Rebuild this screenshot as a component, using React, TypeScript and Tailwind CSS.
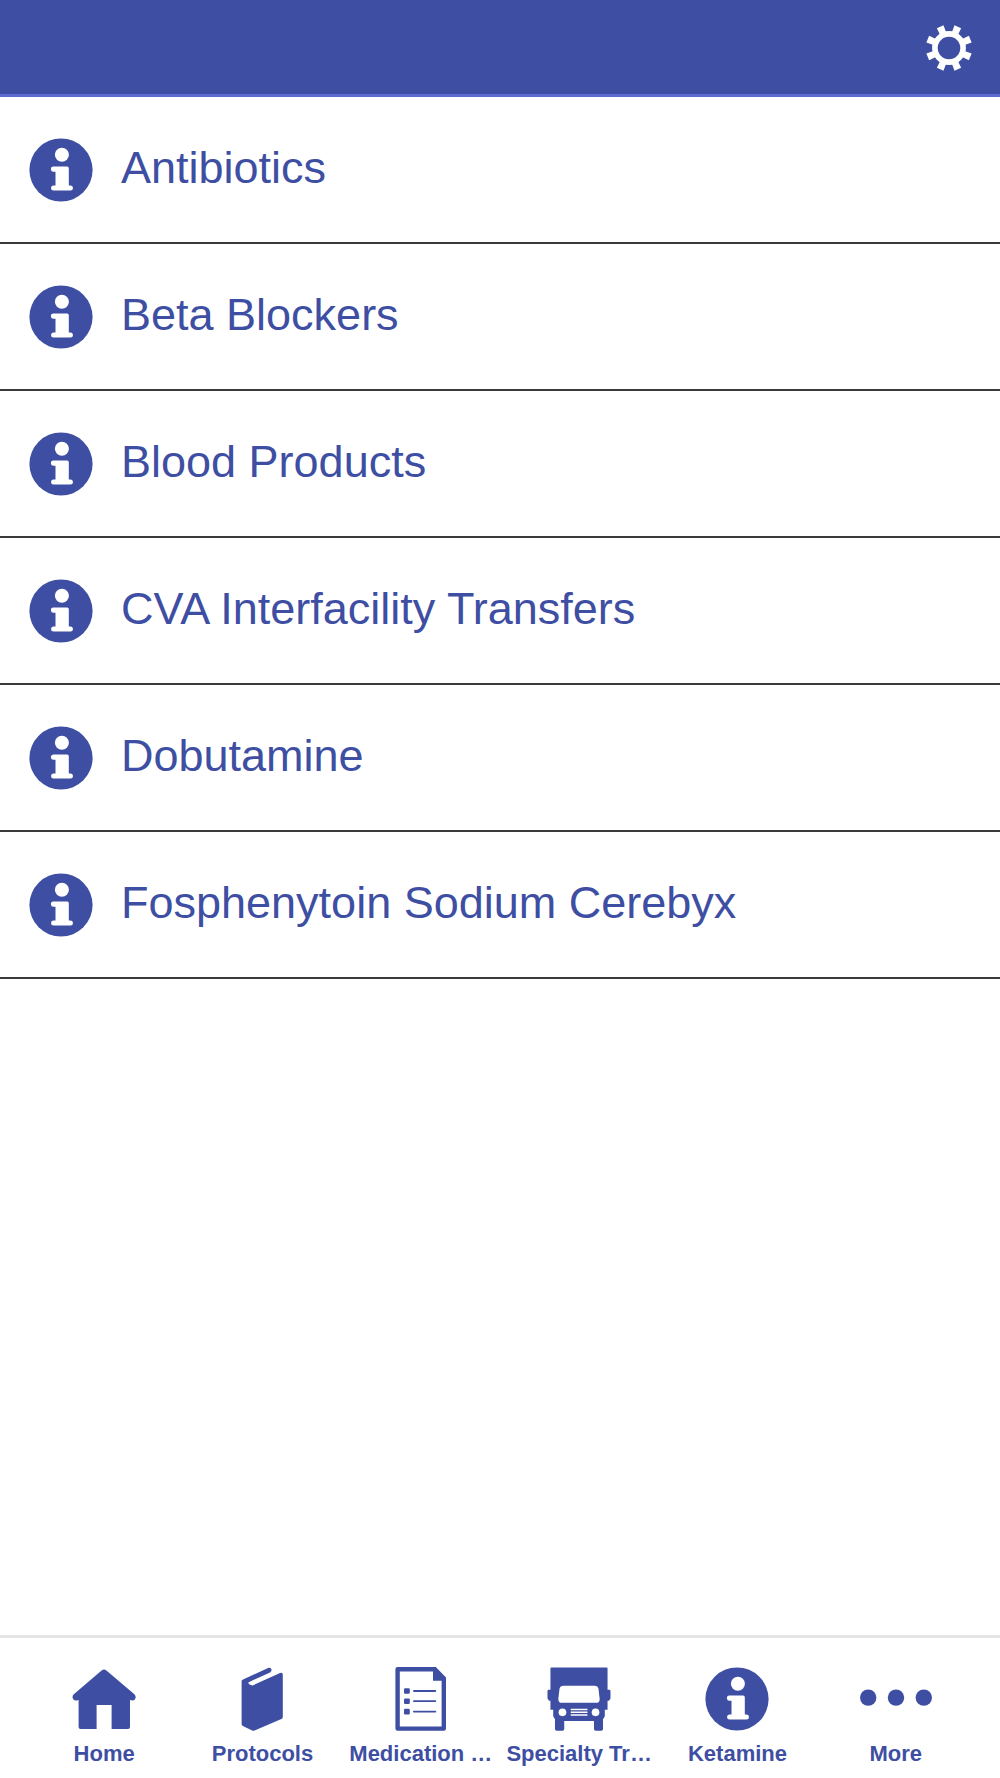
import type { ReactNode } from "react"

interface IconProps {
    className?: string
}

interface Tab {
    label: string
    icon: ReactNode
}

const GearIcon = ({ className }: IconProps) => (
    <svg viewBox="-24 -24 48 48" className={className} fill="currentColor" aria-hidden="true">
        <circle r="14.1" fill="none" stroke="currentColor" strokeWidth="5.6" />
        {[22.5, 67.5, 112.5, 157.5, 202.5, 247.5, 292.5, 337.5].map((angle) => (
            <path key={angle} d="M-3.2 -14 L-3.6 -23 H3.6 L3.2 -14 Z" transform={`rotate(${angle})`} />
        ))}
    </svg>
)

const InfoIcon = ({ className }: IconProps) => (
    <svg viewBox="0 0 64 64" className={className} aria-hidden="true">
        <circle cx="32" cy="32" r="31.6" fill="currentColor" />
        <circle cx="32.9" cy="16.8" r="7" fill="white" />
        <path
            d="M24.4 28.6 H38.2 Q39.8 28.6 39.8 30.2 V47.4 H41.4 A2.5 2.5 0 0 1 41.4 52.4 H24.6 A2.5 2.5 0 0 1 24.6 47.4 H26.5 V33.8 H24.6 A2.6 2.6 0 0 1 24.4 28.6 Z"
            fill="white"
        />
    </svg>
)

const HomeIcon = ({ className }: IconProps) => (
    <svg viewBox="0 0 64 64" className={className} fill="currentColor" aria-hidden="true">
        <path d="M29.6 3.4 Q32 1.4 34.4 3.4 L62.4 27.2 Q64.6 29.6 63 32.2 Q61.4 34.2 58 33 V60 Q58 62 56 62 H39.6 V38 H24.6 V62 H8.6 Q6.6 62 6.6 60 V33 Q3 34.4 1.2 32.2 Q-0.4 29.4 1.8 27.2 Z" />
    </svg>
)

const BookIcon = ({ className }: IconProps) => (
    <svg viewBox="0 0 64 64" className={className} fill="currentColor" aria-hidden="true">
        <path d="M13 12.6 L38.6 0.8 Q41.4 0.4 41.6 3 Q41.6 4.4 40 5.4 L18.2 15.4 Q18.6 17.8 22.8 18.4 L50 6 Q52.8 5.2 52.8 7.6 V50 Q52.8 51.4 51.4 52 L24.6 63.4 Q23.4 64 22.2 63.4 L12.8 59 Q11.6 58.2 11.6 57 V14.6 Q11.6 13.2 13 12.6 Z" />
    </svg>
)

const DocumentIcon = ({ className }: IconProps) => (
    <svg viewBox="0 0 64 64" className={className} fill="currentColor" aria-hidden="true">
        <path
            fillRule="evenodd"
            d="M8.6 0 H46.8 L57 10.4 V61.6 Q57 63.8 55 63.8 H8.6 Q6.4 63.8 6.4 61.6 V2.2 Q6.4 0 8.6 0 Z M10.8 4.6 V59.4 H52.6 V13.8 H44 V4.6 Z"
        />
        {[24, 34.2, 44.6].map((y) => (
            <g key={y}>
                <rect x="15" y={y - 2.8} width="5.8" height="5.6" rx="1.2" />
                <rect x="24" y={y - 0.9} width="23.2" height="1.8" rx="0.8" />
            </g>
        ))}
    </svg>
)

const TruckIcon = ({ className }: IconProps) => (
    <svg viewBox="0 0 64 65" className={className} aria-hidden="true">
        <path
            d="M4 0.6 H60 Q61 0.6 61 1.6 V23 H62.6 Q64 23 64 24.4 V32 L62.4 34.2 H61 V43.4 H58.2 V50 L56.4 53 V63 Q56.4 64.8 54.6 64.8 H49 Q47.2 64.8 47.2 63 V54.8 H17 V63 Q17 64.8 15.2 64.8 H9.4 Q7.6 64.8 7.6 63 V53 L5.8 50 V43.4 H3 V34.2 H1.6 L0 32 V24.4 Q0 23 1.4 23 H3 V1.6 Q3 0.6 4 0.6 Z"
            fill="currentColor"
        />
        <path
            d="M16.4 19 H47.6 Q51.2 19 51.8 22.2 L53 32.4 Q53 36.4 49.4 36.4 H14.6 Q11 36.4 11 32.4 L12.2 22.2 Q12.8 19 16.4 19 Z"
            fill="white"
        />
        <circle cx="15.2" cy="46" r="3.9" fill="white" />
        <circle cx="48.8" cy="46" r="3.9" fill="white" />
        <path d="M23.6 43.2 H40.6 M23.6 46 H40.6 M23.6 48.8 H40.6" stroke="white" strokeWidth="1.5" />
    </svg>
)

const MoreIcon = ({ className }: IconProps) => (
    <svg viewBox="0 0 72 64" className={className} fill="currentColor" aria-hidden="true">
        <circle cx="8.2" cy="30.6" r="8.2" />
        <circle cx="36" cy="30.6" r="8.2" />
        <circle cx="63.8" cy="30.6" r="8.2" />
    </svg>
)

const topics = [
    "Antibiotics",
    "Beta Blockers",
    "Blood Products",
    "CVA Interfacility Transfers",
    "Dobutamine",
    "Fosphenytoin Sodium Cerebyx",
]

const tabs: Tab[] = [
    { label: "Home", icon: <HomeIcon className="size-16" /> },
    { label: "Protocols", icon: <BookIcon className="size-16" /> },
    { label: "Medication …", icon: <DocumentIcon className="size-16" /> },
    { label: "Specialty Tr…", icon: <TruckIcon className="size-16" /> },
    { label: "Ketamine", icon: <InfoIcon className="size-16" /> },
    { label: "More", icon: <MoreIcon className="h-16 w-18" /> },
]

const App = () => {
    return (
        <div className="flex min-h-screen flex-col bg-white font-['Liberation_Sans',Arial,sans-serif] text-[#3e4fa3]">
            <header className="flex justify-end border-b-3 border-[#5c6bd0] bg-[#3e4fa3] pt-6 pr-[27px] pb-[22px] text-white">
                <button type="button" aria-label="Settings">
                    <GearIcon className="size-12" />
                </button>
            </header>
            <main className="flex-1">
                <ul>
                    {topics.map((topic) => (
                        <li key={topic} className="border-b-2 border-[#3a3a3a]">
                            <a href="#" className="flex items-center gap-7 pt-[41px] pr-6 pb-10 pl-[29px]">
                                <InfoIcon className="size-16 shrink-0" />
                                <span className="pb-1 text-[45px] leading-[60px]">{topic}</span>
                            </a>
                        </li>
                    ))}
                </ul>
            </main>
            <nav className="flex border-t-3 border-[#e5e5e5] px-[25px] pt-[29px] pb-3">
                {tabs.map(({ label, icon }) => (
                    <a key={label} href="#" className="flex min-w-0 flex-1 flex-col items-center gap-[11px]">
                        {icon}
                        <span className="text-[22px] leading-6 font-bold whitespace-nowrap">{label}</span>
                    </a>
                ))}
            </nav>
        </div>
    )
}

export default App
